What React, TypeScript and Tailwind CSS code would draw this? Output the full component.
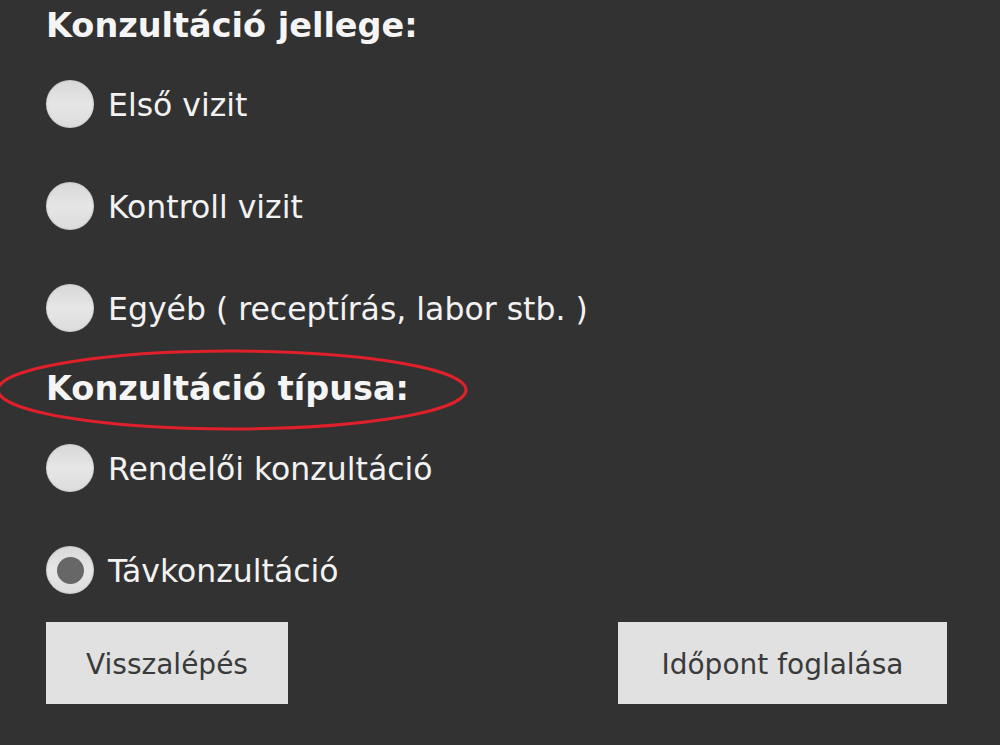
const font = { fontFamily: '"DejaVu Sans", "Open Sans", sans-serif' };

function Radio({ label, checked }: { label: string; checked?: boolean }) {
  return (
    <div className="flex h-[102px] items-center gap-[14px]">
      <span className="flex h-[48px] w-[48px] items-center justify-center rounded-full bg-gradient-to-b from-[#d8d8d8] via-[#e6e6e6] to-[#dcdcdc] shadow-[inset_0_0_2px_rgba(0,0,0,0.25)]">
        {checked && <span className="h-[27px] w-[27px] rounded-full bg-[#676767]" />}
      </span>
      <span className="pt-[3px] text-[31.5px] text-[#f2f2f2]">{label}</span>
    </div>
  );
}

export default function App() {
  return (
    <div className="relative h-[745px] w-[1000px] overflow-hidden bg-[#323232] px-[46px]" style={font}>
      <h2 className="flex h-[53px] items-center text-[33.5px] font-bold text-[#f5f5f5]">Konzultáció jellege:</h2>
      <Radio label="Első vizit" />
      <Radio label="Kontroll vizit" />
      <Radio label="Egyéb ( receptírás, labor stb. )" />
      <h2 className="flex h-[58px] items-center pt-[3px] text-[33.5px] font-bold text-[#f5f5f5]">Konzultáció típusa:</h2>
      <Radio label="Rendelői konzultáció" />
      <Radio label="Távkonzultáció" checked />
      <div className="mt-px flex items-start justify-between pr-[7px]">
        <button className="flex h-[82px] w-[242px] items-center justify-center bg-[#e1e1e1] pt-[3px] text-[28px] text-[#3a3a3a]">Visszalépés</button>
        <button className="flex h-[82px] w-[329px] items-center justify-center bg-[#e1e1e1] pt-[3px] text-[28px] text-[#3a3a3a]">Időpont foglalása</button>
      </div>
      <svg className="pointer-events-none absolute left-0 top-[348px]" width="480" height="86" viewBox="0 0 480 86">
        <ellipse cx="232" cy="42" rx="234" ry="39" fill="none" stroke="#e0202a" strokeWidth="3" />
      </svg>
    </div>
  );
}
